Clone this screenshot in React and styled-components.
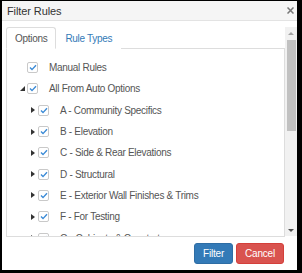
import React from "react";
import styled, { createGlobalStyle } from "styled-components";

const Global = createGlobalStyle`
  html, body { margin: 0; padding: 0; background: #000; }
  body { font-family: "Liberation Sans", Arial, sans-serif; }
  #root { padding: 1px 5px 3px 2px; }
`;

const Dialog = styled.div`
  width: 295px;
  height: 269px;
  background: #fff;
  display: flex;
  flex-direction: column;
`;

const Header = styled.div`
  height: 19px;
  background: #f5f5f5;
  border-bottom: 1px solid #e3e3e3;
  display: flex;
  align-items: center;
  justify-content: space-between;
  padding: 0 3px 0 5px;
`;

const Title = styled.div`
  font-size: 11px;
  color: #333;
  letter-spacing: -0.1px;
`;

const Close = styled.svg`
  width: 7px;
  height: 7px;
  display: block;
`;

const Body = styled.div`
  padding: 6px 0 0 4px;
  display: flex;
  align-items: flex-start;
`;

const Content = styled.div`
  flex: 1;
  height: 209px;
  overflow: hidden;
  border-bottom: 1px solid #ddd;
`;

const TabBar = styled.div`
  display: flex;
  height: 21px;
  border-bottom: 1px solid #ddd;
`;

const Tab = styled.div`
  box-sizing: border-box;
  height: 22px;
  padding: 0 8px;
  display: flex;
  align-items: center;
  font-size: 10px;
  letter-spacing: -0.3px;
  color: ${(p) => (p.$active ? "#555" : "#337ab7")};
  background: #fff;
  border: 1px solid ${(p) => (p.$active ? "#ddd" : "transparent")};
  border-bottom-color: transparent;
  border-radius: 3px 3px 0 0;
  margin-bottom: -1px;
`;

const Panel = styled.div`
  border-left: 1px solid #ddd;
  border-right: 1px solid #ddd;
  padding: 8px 0 20px 0;
`;

const Row = styled.div`
  height: 21.3px;
  display: flex;
  align-items: center;
  padding-left: ${(p) => 10 + p.$level * 11}px;
`;

const Toggle = styled.span`
  width: 10px;
  height: 10px;
  display: flex;
  align-items: center;
  justify-content: center;
`;

const Box = styled.span`
  width: 9px;
  height: 9px;
  border: 1px solid #c9c9c9;
  border-radius: 2px;
  background: #fff;
  display: flex;
  align-items: center;
  justify-content: center;
  margin-right: 11px;
`;

const Label = styled.span`
  font-size: 10px;
  letter-spacing: -0.3px;
  color: #555;
  white-space: nowrap;
`;

const Scrollbar = styled.div`
  width: 12px;
  height: 209px;
  background: #f1f1f1;
  display: flex;
  flex-direction: column;
  align-items: center;
`;

const Arrow = styled.div`
  height: 12px;
  width: 12px;
  display: flex;
  align-items: center;
  justify-content: center;
`;

const Track = styled.div`
  flex: 1;
  width: 100%;
  display: flex;
  justify-content: center;
`;

const Thumb = styled.div`
  width: 9px;
  height: 91px;
  margin-top: 1px;
  background: #c1c1c1;
`;

const Footer = styled.div`
  display: flex;
  justify-content: flex-end;
  gap: 3px;
  padding: 6px 13px 0 0;
`;

const Button = styled.button`
  height: 21px;
  padding: 0 ${(p) => p.$pad}px;
  border: 1px solid ${(p) => (p.$danger ? "#d43f3a" : "#2e6da4")};
  background: ${(p) => (p.$danger ? "#d9534f" : "#337ab7")};
  color: #fff;
  font-family: "Liberation Sans", Arial, sans-serif;
  font-size: 10px;
  border-radius: 3px;
  letter-spacing: -0.2px;
`;

const Check = () => (
  <svg width="8" height="7" viewBox="0 0 8 7">
    <polyline points="1,3.6 3,5.6 7,1.2" fill="none" stroke="#3a8ad6" strokeWidth="1.4" />
  </svg>
);

const Caret = ({ open }) =>
  open ? (
    <svg width="5" height="5" viewBox="0 0 5 5">
      <polygon points="5,0 5,5 0,5" fill="#333" />
    </svg>
  ) : (
    <svg width="4" height="6" viewBox="0 0 4 6">
      <polygon points="0,0 4,3 0,6" fill="#333" />
    </svg>
  );

const items = [
  { level: 1, label: "Manual Rules" },
  { level: 1, label: "All From Auto Options", caret: "open" },
  { level: 2, label: "A - Community Specifics", caret: "closed" },
  { level: 2, label: "B - Elevation", caret: "closed" },
  { level: 2, label: "C - Side & Rear Elevations", caret: "closed" },
  { level: 2, label: "D - Structural", caret: "closed" },
  { level: 2, label: "E - Exterior Wall Finishes & Trims", caret: "closed" },
  { level: 2, label: "F - For Testing", caret: "closed" },
  { level: 2, label: "G - Cabinets & Countertops", caret: "closed" },
];

export default function App() {
  return (
    <>
      <Global />
      <Dialog>
        <Header>
          <Title>Filter Rules</Title>
          <Close viewBox="0 0 7 7">
            <path d="M0.5 0.5 L6.5 6.5 M6.5 0.5 L0.5 6.5" stroke="#777" strokeWidth="1.5" />
          </Close>
        </Header>
        <Body>
          <Content>
            <TabBar>
              <Tab $active>Options</Tab>
              <Tab>Rule Types</Tab>
            </TabBar>
            <Panel>
              {items.map((it) => (
                <Row key={it.label} $level={it.level - 1}>
                  <Toggle>{it.caret && <Caret open={it.caret === "open"} />}</Toggle>
                  <Box>
                    <Check />
                  </Box>
                  <Label>{it.label}</Label>
                </Row>
              ))}
            </Panel>
          </Content>
          <Scrollbar>
            <Arrow>
              <svg width="6" height="3" viewBox="0 0 6 3">
                <polygon points="0,3 3,0 6,3" fill="#a3a3a3" />
              </svg>
            </Arrow>
            <Track>
              <Thumb />
            </Track>
            <Arrow>
              <svg width="6" height="3" viewBox="0 0 6 3">
                <polygon points="0,0 6,0 3,3" fill="#505050" />
              </svg>
            </Arrow>
          </Scrollbar>
        </Body>
        <Footer>
          <Button $pad={8}>Filter</Button>
          <Button $danger $pad={8}>Cancel</Button>
        </Footer>
      </Dialog>
    </>
  );
}
